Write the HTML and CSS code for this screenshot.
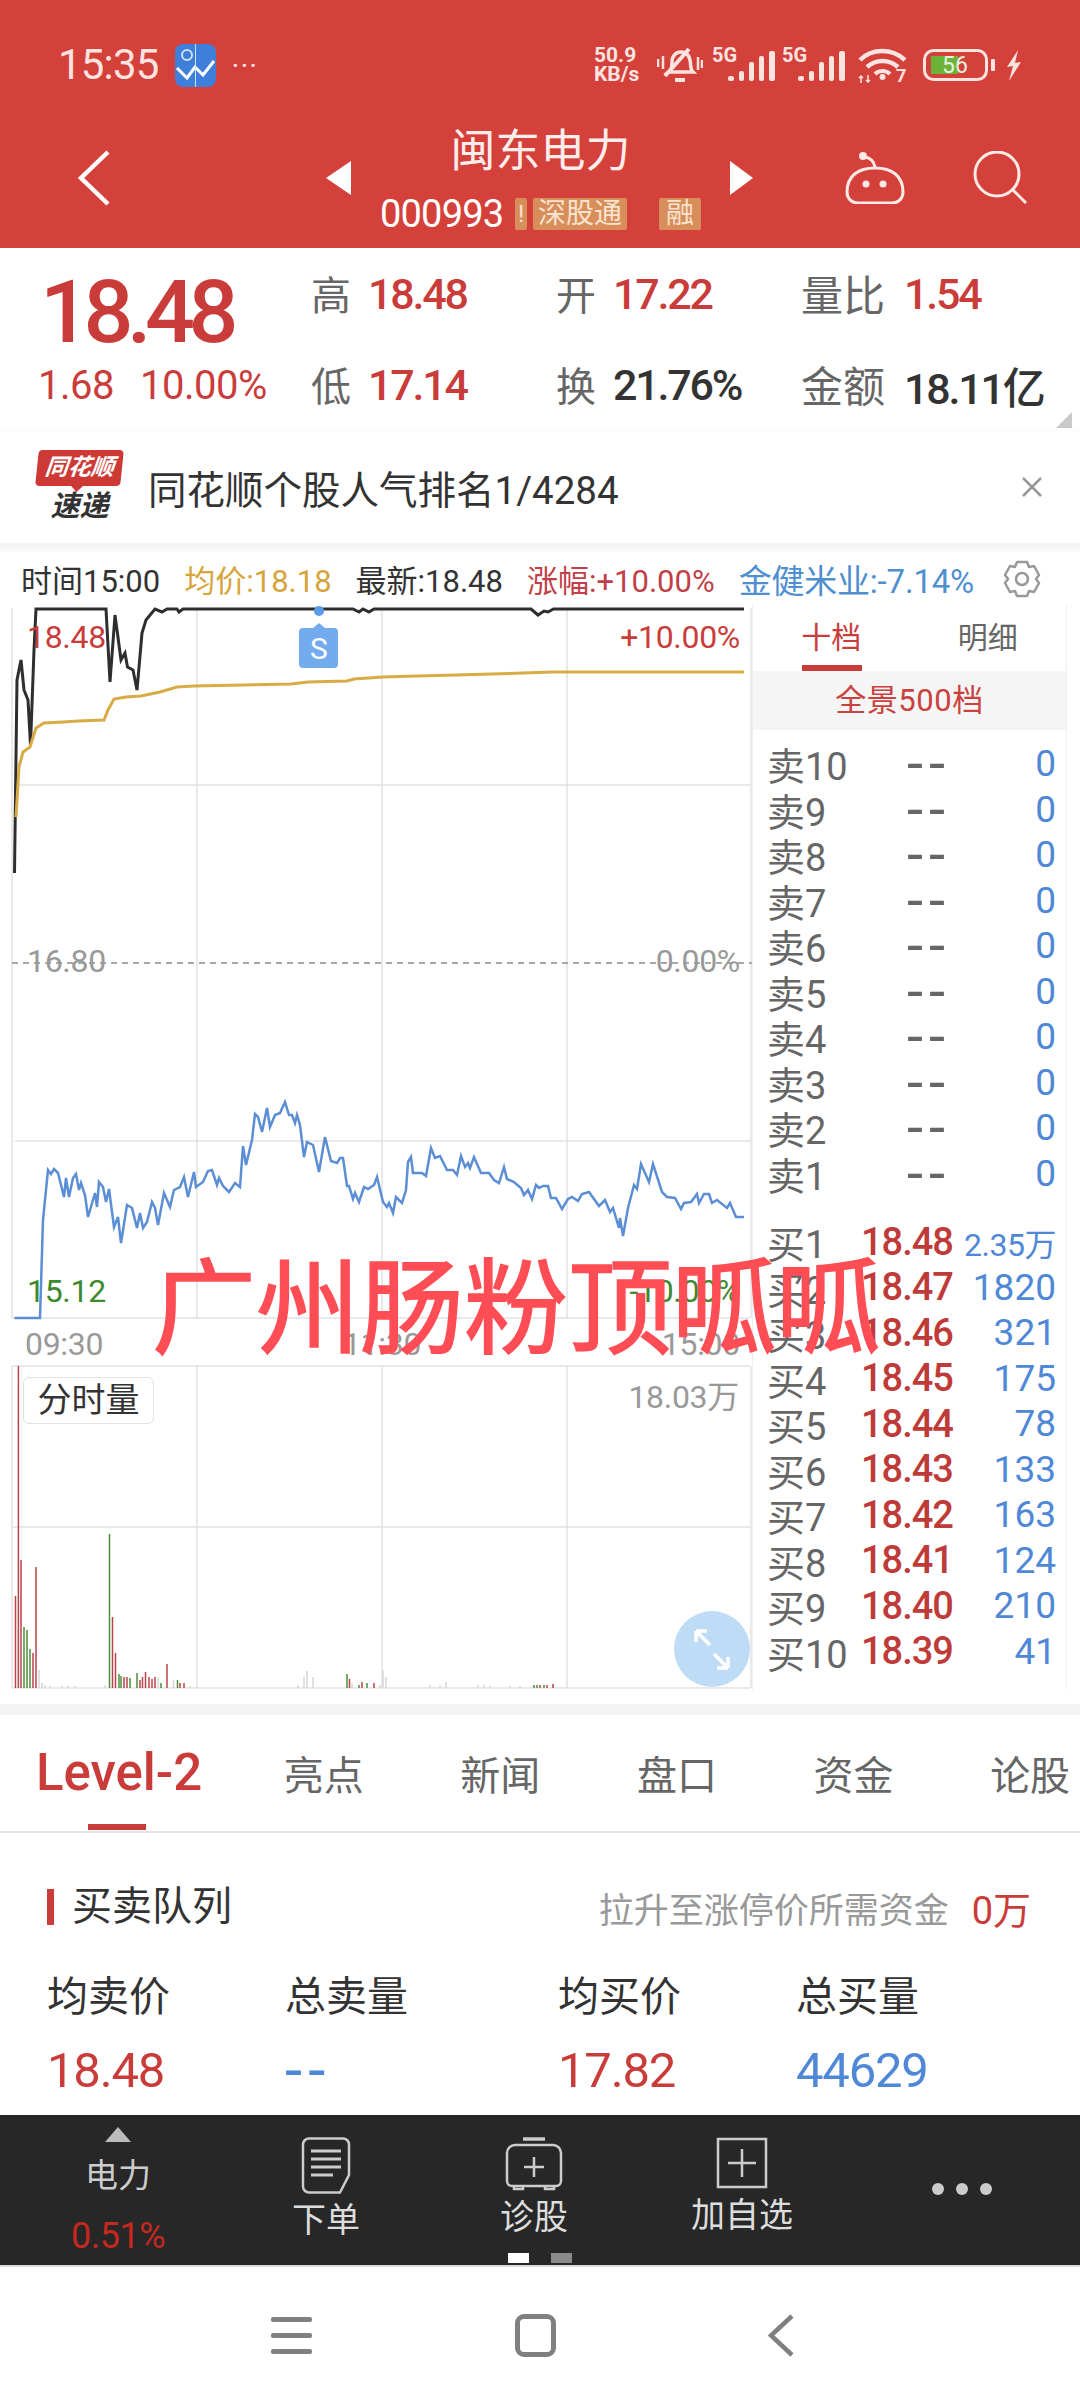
FILE: index.html
```html
<!DOCTYPE html>
<html lang="zh-CN">
<head>
    <meta charset="UTF-8">
    <meta name="viewport" content="width=device-width, initial-scale=1.0">
    <title>闽东电力</title>
    <link rel="stylesheet" href="styles.css">
</head>
<body>
<div id="page">
    <div id="header">
        <div class="status">
            <span class="time">15:35</span>
            <svg class="app-icon" width="41" height="43" viewBox="0 0 41 43">
                <rect width="41" height="43" rx="8" fill="#3f7fdc"/>
                <path d="M2 24l10 10 8-11 8 8 11-14" fill="none" stroke="#fff" stroke-width="3"/>
                <path d="M20.500 0v43" stroke="#cfe0f8" stroke-width="1"/>
                <circle cx="12" cy="11" r="5" fill="none" stroke="#cfe0f8" stroke-width="2"/>
            </svg>
            <span class="more">···</span>
            <div class="status-right">
                <div class="speed"><span>50.9</span><span>KB/s</span></div>
                <svg class="st-bell" width="46" height="38" viewBox="0 0 46 38" fill="none" stroke="#fbe3e0" stroke-width="3.500">
                    <path d="M12 26c3-2 3-6 3-10 0-6 4-10 9-10s8 3 9 8c1 5 0 9 3 12z"/>
                    <path d="M32 3L8 30" stroke-width="4"/>
                    <path d="M18 34h10" stroke-width="4"/>
                    <path d="M1 13v8M6 10v13M41 11v13M45 14v8" stroke-width="2.500"/>
                </svg>
                <svg class="st-sig1" width="63" height="46" viewBox="0 -4 63 46" fill="#fbe3e0">
                    <text x="0" y="16" class="sig-text">5G</text>
                    <rect x="16" y="30" width="6" height="5" rx="2"/>
                    <rect x="27" y="25" width="5" height="10" rx="2"/>
                    <rect x="37" y="16" width="5" height="19" rx="2"/>
                    <rect x="47" y="10" width="5" height="25" rx="2"/>
                    <rect x="57" y="5" width="6" height="30" rx="2"/>
                </svg>
                <svg class="st-sig2" width="63" height="46" viewBox="0 -4 63 46" fill="#fbe3e0">
                    <text x="0" y="16" class="sig-text">5G</text>
                    <rect x="16" y="30" width="6" height="5" rx="2"/>
                    <rect x="27" y="25" width="5" height="10" rx="2"/>
                    <rect x="37" y="16" width="5" height="19" rx="2"/>
                    <rect x="47" y="10" width="5" height="25" rx="2"/>
                    <rect x="57" y="5" width="6" height="30" rx="2"/>
                </svg>
                <svg class="st-wifi" width="49" height="46" viewBox="0 -4 49 46" fill="none" stroke="#fbe3e0">
                    <path d="M2 14C14 2 34 2 47 14" stroke-width="4.500"/>
                    <path d="M9 21c9-8 22-8 31 0" stroke-width="4.500"/>
                    <path d="M17 28c4-4 11-4 15 0" stroke-width="4"/>
                    <circle cx="24.500" cy="31" r="3" fill="#fbe3e0" stroke="none"/>
                    <path d="M3 37v-7M1 32l2-2 2 2M10 29v7M8 34l2 2 2-2" stroke-width="1.500"/>
                    <text x="38" y="36" class="wifi-num">7</text>
                </svg>
                <svg class="st-batt" width="72" height="32" viewBox="0 0 72 32">
                    <rect x="1.500" y="1.500" width="62" height="29" rx="9" fill="none" stroke="#fbe3e0" stroke-width="3"/>
                    <rect x="8" y="7" width="27" height="18" fill="#6cb33a"/>
                    <text x="32" y="24" text-anchor="middle" class="batt-num">56</text>
                    <rect x="68" y="10" width="4" height="12" rx="1" fill="#fbe3e0"/>
                </svg>
                <svg class="st-bolt" width="17" height="31" viewBox="0 0 17 31" fill="#fbe3e0">
                    <path d="M13 0L2 17l6-1-4 15L16 12l-6 1z"/>
                </svg>
            </div>
        </div>
        <div class="nav-row">
            <svg class="back" width="33" height="56" viewBox="0 0 33 56" fill="none" stroke="#fff" stroke-width="4.500">
                <path d="M31 2L4 28l27 26"/>
            </svg>
            <span class="tri tri-left"></span>
            <div class="stock">
                <div class="stock-name">闽东电力</div>
                <div class="stock-code">
                    <span class="code">000993</span>
                    <span class="tag tag-cut">!</span>
                    <span class="tag tag-sgt">深股通</span>
                    <span class="tag tag-rong">融</span>
                </div>
            </div>
            <span class="tri tri-right"></span>
            <svg class="robot" width="60" height="52" viewBox="0 0 60 52" fill="none" stroke="#fde9e6" stroke-width="3">
                <circle cx="18" cy="4" r="4" fill="#fde9e6" stroke="none"/>
                <path d="M20 5c6 1 9 5 10 10"/>
                <path d="M2 40C2 24 13 16 30 16s28 8 28 24c0 7-5 11-11 11H13C7 51 2 47 2 40z"/>
                <circle cx="21" cy="32" r="3.500" fill="#fde9e6" stroke="none"/>
                <circle cx="38" cy="32" r="3.500" fill="#fde9e6" stroke="none"/>
            </svg>
            <svg class="search" width="55" height="54" viewBox="0 0 55 54" fill="none" stroke="#fde9e6" stroke-width="3">
                <circle cx="24" cy="23" r="22"/>
                <path d="M40 39l13 13"/>
            </svg>
        </div>
    </div>

    <div class="quote">
        <div class="price">18.48</div>
        <div class="stat"><span class="lbl">高</span><span class="val red">18.48</span></div>
        <div class="stat"><span class="lbl">开</span><span class="val red">17.22</span></div>
        <div class="stat"><span class="lbl wide">量比</span><span class="val red">1.54</span></div>
        <div class="change"><span>1.68</span><span>10.00%</span></div>
        <div class="stat"><span class="lbl">低</span><span class="val red">17.14</span></div>
        <div class="stat"><span class="lbl">换</span><span class="val dark">21.76%</span></div>
        <div class="stat"><span class="lbl wide">金额</span><span class="val dark">18.11亿</span></div>
        <span class="corner"></span>
    </div>

    <div class="notice">
        <div class="logo">
            <div class="logo-top">同花顺</div>
            <div class="logo-bot">速递</div>
        </div>
        <span class="notice-text">同花顺个股人气排名1/4284</span>
        <svg class="close" width="22" height="22" viewBox="0 0 22 22" stroke="#999" stroke-width="2.500">
            <path d="M2 2l18 18M20 2L2 20"/>
        </svg>
    </div>

    <div class="gap"></div>

    <div class="chart-head">
        <span class="c-dark">时间15:00</span>
        <span class="c-gold">均价:18.18</span>
        <span class="c-dark">最新:18.48</span>
        <span class="c-red">涨幅:+10.00%</span>
        <span class="c-blue">金健米业:-7.14%</span>
        <svg class="gear" width="40" height="38" viewBox="0 0 40 38" fill="none" stroke="#999" stroke-width="2.500">
            <path d="M15 2h10l2 5 5-1 5 9-3 4 3 4-5 9-5-1-2 5H15l-2-5-5 1-5-9 3-4-3-4 5-9 5 1z" stroke-linejoin="round"/>
            <circle cx="20" cy="19" r="6"/>
        </svg>
    </div>

    <div class="chart-row">
        <svg class="chart" width="752" height="1100" viewBox="0 605 752 1100" fill="none">
            <!-- grid -->
            <path class="grid" d="M12 608V1318M197 608V1318M382 608V1318M567 608V1318M751 608V1318M15 785H750M15 1141H750M12 1318H750"/>
            <path class="grid" d="M12 1366H750M12 1527H750M12 1688H750M12 1366V1688M197 1366V1688M382 1366V1688M567 1366V1688M751 1366V1688"/>
            <path class="mid" d="M12 963H755"/>
            <!-- price -->
            <path class="l-black" d="M14.500 873L17 680 21 660 24 690 28 700 30.500 745 34 650 36 609H106L110 682 115 615 121 660 125 653 127.500 667 133 670 137 690 142 633 146 620 155 609 162 612 167 609H177L179 612 183 609H347L353 609 359 612 363 609 369 612 374 609H531L538 615 544 611 548 612 553.500 609H744"/>
            <path class="l-gold" d="M16 817L19 767 23 752 30 747 36 728 44 723 63 722 78 721 104 720 108 710 114 699 126 697 141 696 160 692 177 687 194 686 291 684 308 682 347 681 354 679 383 677 417 676 456 675 523 673 553 672H744"/>
            <path class="l-blue" d="M14.500 1318H40L43 1220 48 1170 51 1174 54 1169 58 1173 64 1197 66 1178 69 1197 73 1178 76 1174 79 1190 81 1183 85 1195 88 1217 95 1193 97 1207 99 1182 103 1187 106 1202 109 1189 114 1227 118 1217 121 1243 127 1205 132 1208 137 1228 140 1213 143 1228 147 1222 152 1202 155 1208 158 1225 164 1193 170 1207 174 1190 180 1187 184 1177 188 1197 194 1172 196 1187 203 1182 208 1171 212 1170 217 1185 219 1178 223 1186 229 1192 235 1183 240 1187 243 1146 246 1165 252 1140 255 1114 258 1117 262 1132 267 1108 270 1127 275 1115 280 1113 285 1102 289 1115 292 1115 295 1123 297 1115 300 1125 304 1157 307 1142 313 1145 319 1172 325 1137 331 1161 337 1163 340 1158 343 1158 347 1186 349 1186 353 1199 355 1193 359 1202 364 1187 368 1189 374 1185 377 1177 383 1202 387 1207 389 1203 393 1213 396 1197 402 1203 406 1190 408 1162 411 1157 413 1173 422 1173 426 1176 431 1148 435 1158 440 1156 447 1170 453 1170 457 1175 461 1156 465 1167 468 1163 470 1168 474 1157 481 1173 489 1173 494 1180 499 1183 504 1167 507 1179 514 1182 521 1188 524 1195 528 1190 532 1199 536 1185 539 1188 543 1186 548 1186 551 1198 556 1198 562 1209 568 1199 572 1197 578 1201 582 1194 589 1192 599 1206 605 1200 610 1212 613 1208 619 1228 620 1218 623 1236 628 1208 634 1185 637 1189 641 1164 649 1182 653 1164 662 1192 667 1197 675 1198 681 1209 684 1203 691 1202 697 1194 699 1203 704 1194 709 1194 712 1203 717 1200 727 1208 730 1203 736 1217 744 1217"/>
            <!-- s marker -->
            <circle cx="319" cy="611" r="5" fill="#5b9bec"/>
            <path d="M299 632a4 4 0 0 1 4-4h10l6-5 6 5h9a4 4 0 0 1 4 4v32a4 4 0 0 1-4 4h-31a4 4 0 0 1-4-4z" fill="#74abee"/>
            <text x="319" y="659" text-anchor="middle" class="t-s">S</text>
            <!-- labels -->
            <text x="27" y="648" class="t-axis fill-red">18.48</text>
            <text x="740" y="648" text-anchor="end" class="t-axis fill-red">+10.00%</text>
            <text x="27" y="972" class="t-axis fill-gray">16.80</text>
            <text x="740" y="972" text-anchor="end" class="t-axis fill-gray">0.00%</text>
            <text x="27" y="1302" class="t-axis fill-green">15.12</text>
            <text x="740" y="1302" text-anchor="end" class="t-axis fill-green">-10.00%</text>
            <text x="25" y="1355" class="t-axis fill-gray">09:30</text>
            <text x="382" y="1355" text-anchor="middle" class="t-axis fill-gray">11:30</text>
            <text x="740" y="1355" text-anchor="end" class="t-axis fill-gray">15:00</text>
            <!-- volume -->
            <path class="v-gray" d="M39 1670V1688M42 1683V1688M45 1685V1688M50 1686V1688M62 1686V1688M68 1686V1688M75 1686V1688M105 1685V1688M158 1677V1688M173.500 1680V1688M190 1686V1688M298 1685V1688M304 1677V1688M307 1671V1688M313 1677V1688M352 1683V1688M380 1685V1688M383 1670V1688M386 1677V1688M430 1685V1688M440 1685V1688M446 1682V1688M478 1685V1688M484 1685V1688M490 1686V1688M510 1686V1688M520 1686V1688"/>
            <path class="v-red" d="M18.400 1366V1688M15.500 1596V1688M21 1560V1688M33 1653V1688M36 1567V1688M112.500 1617V1688M115.500 1653V1688M124 1677V1688M127 1677V1688M140 1680V1688M142.500 1677V1688M145.500 1672V1688M149 1677V1688M152 1679V1688M155 1677V1688M167 1664V1688M180 1683V1688M184 1683V1688M349.500 1679V1688M362 1682V1688M374 1683V1688M540 1685V1688M547 1685V1688M553 1684V1688"/>
            <path class="v-green" d="M24 1627V1688M27 1630V1688M30 1649V1688M109.500 1534V1688M119 1674V1688M121 1676V1688M130 1678V1688M137 1673V1688M161 1683V1688M177.500 1680V1688M347 1674V1688M359 1685V1688M367 1683V1688M534 1685V1688M537 1685V1688M544 1685V1688"/>
            <text x="739" y="1408" text-anchor="end" class="t-axis fill-gray">18.03万</text>
            <!-- expand button -->
            <circle cx="712" cy="1649" r="38" fill="#bfdcf7"/>
            <path d="M696 1631v11M696 1631h11M696 1631l14 14M728 1668v-11M728 1668h-11M728 1668l-14-14" stroke="#fff" stroke-width="3.500"/>
        </svg>
        <div class="vol-tag">分时量</div>
        <div class="book">
            <div class="book-tabs">
                <span class="book-tab on">十档</span>
                <span class="book-tab">明细</span>
            </div>
            <div class="book-band">全景500档</div>
            <div class="book-list sell">
                <div class="row"><span class="r-name">卖10</span><span class="r-price none">--</span><span class="r-qty">0</span></div>
                <div class="row"><span class="r-name">卖9</span><span class="r-price none">--</span><span class="r-qty">0</span></div>
                <div class="row"><span class="r-name">卖8</span><span class="r-price none">--</span><span class="r-qty">0</span></div>
                <div class="row"><span class="r-name">卖7</span><span class="r-price none">--</span><span class="r-qty">0</span></div>
                <div class="row"><span class="r-name">卖6</span><span class="r-price none">--</span><span class="r-qty">0</span></div>
                <div class="row"><span class="r-name">卖5</span><span class="r-price none">--</span><span class="r-qty">0</span></div>
                <div class="row"><span class="r-name">卖4</span><span class="r-price none">--</span><span class="r-qty">0</span></div>
                <div class="row"><span class="r-name">卖3</span><span class="r-price none">--</span><span class="r-qty">0</span></div>
                <div class="row"><span class="r-name">卖2</span><span class="r-price none">--</span><span class="r-qty">0</span></div>
                <div class="row"><span class="r-name">卖1</span><span class="r-price none">--</span><span class="r-qty">0</span></div>
            </div>
            <div class="book-list buy">
                <div class="row"><span class="r-name">买1</span><span class="r-price">18.48</span><span class="r-qty small">2.35万</span></div>
                <div class="row"><span class="r-name">买2</span><span class="r-price">18.47</span><span class="r-qty">1820</span></div>
                <div class="row"><span class="r-name">买3</span><span class="r-price">18.46</span><span class="r-qty">321</span></div>
                <div class="row"><span class="r-name">买4</span><span class="r-price">18.45</span><span class="r-qty">175</span></div>
                <div class="row"><span class="r-name">买5</span><span class="r-price">18.44</span><span class="r-qty">78</span></div>
                <div class="row"><span class="r-name">买6</span><span class="r-price">18.43</span><span class="r-qty">133</span></div>
                <div class="row"><span class="r-name">买7</span><span class="r-price">18.42</span><span class="r-qty">163</span></div>
                <div class="row"><span class="r-name">买8</span><span class="r-price">18.41</span><span class="r-qty">124</span></div>
                <div class="row"><span class="r-name">买9</span><span class="r-price">18.40</span><span class="r-qty">210</span></div>
                <div class="row"><span class="r-name">买10</span><span class="r-price">18.39</span><span class="r-qty">41</span></div>
            </div>
        </div>
        <div class="watermark">广州肠粉顶呱呱</div>
    </div>

    <div class="gap2"></div>

    <div class="tabs">
        <span class="tab on">Level-2</span>
        <span class="tab">亮点</span>
        <span class="tab">新闻</span>
        <span class="tab">盘口</span>
        <span class="tab">资金</span>
        <span class="tab">论股</span>
    </div>

    <div class="queue">
        <div class="queue-head">
            <span class="queue-title">买卖队列</span>
            <span class="queue-note">拉升至涨停价所需资金</span>
            <span class="queue-amt">0万</span>
        </div>
        <div class="queue-grid">
            <span class="q-lbl">均卖价</span>
            <span class="q-lbl">总卖量</span>
            <span class="q-lbl">均买价</span>
            <span class="q-lbl">总买量</span>
            <span class="q-val red">18.48</span>
            <span class="q-val blue q-dash">--</span>
            <span class="q-val red">17.82</span>
            <span class="q-val blue">44629</span>
        </div>
    </div>

    <div class="toolbar">
        <div class="tool tool-sector">
            <span class="up"></span>
            <span class="sector-name">电力</span>
            <span class="sector-pct">0.51%</span>
        </div>
        <div class="tool">
            <svg width="50" height="57" viewBox="0 0 50 57" fill="none" stroke="#ccc" stroke-width="2.500">
                <path d="M8 1.500h34a6 6 0 0 1 6 6V38L39 55.500H8a6 6 0 0 1-6-6v-42a6 6 0 0 1 6-6z"/>
                <path d="M10 14h30M10 22h30M10 30h30M10 38h22" stroke-width="3"/>
            </svg>
            <span class="tool-name">下单</span>
        </div>
        <div class="tool">
            <svg width="58" height="54" viewBox="0 0 58 54" fill="none" stroke="#ccc" stroke-width="2.500">
                <path d="M18 2h22" stroke-width="3.500"/>
                <path d="M10 8h38a8 8 0 0 1 8 8v28a5 5 0 0 1-5 5H7a5 5 0 0 1-5-5V16a8 8 0 0 1 8-8z"/>
                <path d="M29 20v20M19 30h20M9 49v3h9v-3M40 49v3h9v-3"/>
            </svg>
            <span class="tool-name">诊股</span>
        </div>
        <div class="tool">
            <svg width="52" height="52" viewBox="0 0 52 52" fill="none" stroke="#ccc" stroke-width="2.500">
                <path d="M2 2h48v48H2zM26 12v28M12 26h28"/>
            </svg>
            <span class="tool-name">加自选</span>
        </div>
        <div class="tool tool-more"><i></i><i></i><i></i></div>
        <span class="page-dot on"></span>
        <span class="page-dot off"></span>
    </div>

    <div class="sysnav">
        <span class="menu"><i></i><i></i><i></i></span>
        <span class="home"></span>
        <svg class="sys-back" width="26" height="43" viewBox="0 0 26 43" fill="none" stroke="#808080" stroke-width="4.500">
            <path d="M24 2L3 21.500 24 41"/>
        </svg>
    </div>
</div>
</body>
</html>
```

FILE: styles.css
```css
* {
    box-sizing: border-box;
}

body {
    margin: 0;
    padding: 0;
    background-color: #fff;
    font-family: Roboto, "Noto Sans CJK SC", sans-serif;
}

#page {
    width: 1080px;
    height: 2403px;
    overflow: hidden;
    position: relative;
}

.red { color: #c93c3a; }
.blue { color: #4f88d6; }
.dark { color: #333; }

/* header */
#header {
    height: 248px;
    background-color: #d4403a;
}

.status {
    height: 126px;
    display: flex;
    align-items: center;
    padding: 4px 58px 0 58px;
    color: #fbe3e0;
}

.time {
    font-size: 42px;
    letter-spacing: -0.800px;
    line-height: 1;
}

.app-icon { margin-left: 16px; }

.more {
    margin-left: 16px;
    font-size: 30px;
    letter-spacing: 1px;
}

.status-right {
    margin-left: auto;
    display: flex;
    align-items: center;
}

.speed {
    width: 52px;
    display: flex;
    flex-direction: column;
    font-size: 21px;
    font-weight: 700;
    line-height: 19px;
}

.st-bell { margin-left: 11px; }
.st-sig1 { margin-left: 9px; }
.st-sig2 { margin-left: 7px; }
.st-wifi { margin-left: 13px; }
.st-batt { margin-left: 16px; }
.st-bolt { margin-left: 10px; }

.sig-text {
    font-size: 20px;
    font-weight: 700;
    fill: #fbe3e0;
    stroke: none;
}

.wifi-num {
    font-size: 18px;
    font-weight: 700;
    fill: #fbe3e0;
    stroke: none;
}

.batt-num {
    font-size: 23px;
    fill: #e6f3dc;
}

.nav-row {
    height: 122px;
    padding: 0 0 18px 77px;
    display: flex;
    align-items: center;
}

.tri {
    width: 0;
    height: 0;
    border-top: 17px solid transparent;
    border-bottom: 17px solid transparent;
}

.tri-left {
    margin-left: 216px;
    border-right: 25px solid #fff;
}

.tri-right {
    border-left: 23px solid #fff;
}

.stock {
    width: 379px;
}

.stock-name {
    height: 50px;
    line-height: 50px;
    font-size: 45px;
    text-align: center;
    color: #fdeeec;
}

.stock-code {
    margin-top: 21px;
    height: 32px;
    padding-left: 29px;
    display: flex;
    align-items: center;
}

.code {
    width: 135px;
    font-size: 38px;
    letter-spacing: -0.800px;
    color: #fff;
}

.tag {
    height: 32px;
    line-height: 32px;
    background-color: #d88e5b;
    color: #f8e3cf;
    font-size: 28px;
    border-radius: 2px;
    text-align: center;
}

.tag-cut {
    width: 12px;
    overflow: hidden;
    font-size: 24px;
}

.tag-sgt {
    margin-left: 6px;
    width: 94px;
    white-space: nowrap;
}

.tag-rong {
    margin-left: 32px;
    width: 42px;
}

.robot { margin-left: 92px; }
.search { margin-left: 68px; }

/* quote */
.quote {
    height: 182px;
    position: relative;
    display: grid;
    grid-template-columns: 273px 245px 245px 1fr;
    grid-template-rows: 92px 90px;
    padding-left: 38px;
    align-items: center;
}

.price {
    margin-top: 36px;
    padding-left: 2px;
    height: 56px;
    line-height: 56px;
    font-size: 88px;
    font-weight: 500;
    letter-spacing: -6.500px;
    color: #c93c3a;
}

.change {
    display: flex;
    gap: 26px;
    font-size: 40px;
    letter-spacing: -0.500px;
    color: #c93c3a;
}

.stat {
    display: flex;
    align-items: center;
}

.lbl {
    width: 57px;
    margin-top: -3px;
    font-size: 40px;
    color: #666;
}

.lbl.wide {
    width: 103px;
    font-size: 42px;
}

.val {
    font-size: 43px;
    font-weight: 500;
    letter-spacing: -2.200px;
}

.corner {
    position: absolute;
    right: 8px;
    bottom: 2px;
    width: 0;
    height: 0;
    border-left: 16px solid transparent;
    border-bottom: 16px solid #c9c9c9;
}

/* notice */
.notice {
    height: 113px;
    padding: 0 37px;
    display: flex;
    align-items: center;
    border-top: 1px solid #f8f8f8;
}

.logo {
    width: 85px;
    height: 74px;
}

.logo-top {
    position: relative;
    height: 36px;
    line-height: 35px;
    background-color: #cd3a36;
    border-radius: 4px;
    transform: skewX(-6deg);
    color: #fff;
    font-size: 23px;
    font-weight: 700;
    font-style: italic;
    text-align: center;
    white-space: nowrap;
}

.logo-top::after {
    content: "";
    position: absolute;
    left: 36px;
    bottom: -6px;
    width: 12px;
    height: 12px;
    background-color: #cd3a36;
    transform: rotate(45deg) scale(0.7);
}

.logo-bot {
    margin-top: 4px;
    line-height: 32px;
    font-size: 29px;
    font-weight: 700;
    font-style: italic;
    text-align: center;
    color: #333;
}

.notice-text {
    margin-left: 26px;
    font-size: 38.500px;
    color: #333;
}

.close {
    margin-left: auto;
}

.gap {
    height: 9px;
    background: linear-gradient(#f2f2f2, #fbfbfb);
}

/* chart head */
.chart-head {
    height: 53px;
    padding: 0 0 0 21px;
    display: flex;
    align-items: center;
    gap: 24px;
    font-size: 31px;
    white-space: nowrap;
}

.c-dark { color: #333; }
.c-gold { color: #d6a43a; }
.c-red { color: #c23f48; }
.c-blue { color: #4f8fd0; font-size: 33px; letter-spacing: -0.200px; }

.gear { margin-left: 4px; }

/* chart */
.chart-row {
    height: 1099px;
    position: relative;
    display: flex;
}

.chart { flex: none; }

.grid {
    stroke: #e2e2e4;
    stroke-width: 1.500;
}

.mid {
    stroke: #a8a8a8;
    stroke-width: 2;
    stroke-dasharray: 6 5;
}

.l-black {
    stroke: #2e2e2e;
    stroke-width: 3;
}

.l-gold {
    stroke: #d8ab46;
    stroke-width: 3;
}

.l-blue {
    stroke: #5b8ed4;
    stroke-width: 2.500;
}

.v-red {
    stroke: #b9444a;
    stroke-width: 1.500;
}

.v-green {
    stroke: #4c8c3a;
    stroke-width: 1.500;
}

.v-gray {
    stroke: #d6d6d6;
    stroke-width: 1.500;
}

.t-axis {
    font-size: 32px;
    letter-spacing: -0.300px;
    stroke: none;
}

.t-s {
    font-size: 30px;
    fill: #fff;
    stroke: none;
}

.fill-red { fill: #c93c3a; }
.fill-gray { fill: #999; }
.fill-green { fill: #3d8a2e; }

.vol-tag {
    position: absolute;
    left: 23px;
    top: 772px;
    width: 131px;
    height: 47px;
    line-height: 44px;
    background-color: #fff;
    border: 1.500px solid #e2e2e2;
    border-radius: 6px;
    font-size: 34px;
    text-align: center;
    color: #333;
}

.watermark {
    position: absolute;
    left: 152px;
    top: 641px;
    font-size: 104px;
    line-height: 130px;
    font-weight: 400;
    -webkit-text-stroke: 1.500px #ff4d55;
    color: #ff4d55;
    white-space: nowrap;
}

/* order book */
.book {
    width: 315px;
    height: 1085px;
    border-right: 1.500px solid #f0f0f0;
    border-left: 1.500px solid #efefef;
}

.book-tabs {
    height: 66px;
    display: flex;
}

.book-tab {
    width: 157px;
    text-align: center;
    padding-top: 8px;
    font-size: 30px;
    color: #666;
}

.book-tab.on {
    position: relative;
    color: #c93c3a;
}

.book-tab.on::after {
    content: "";
    position: absolute;
    left: 49px;
    bottom: 0;
    width: 60px;
    height: 6px;
    background-color: #c93c3a;
}

.book-band {
    height: 59px;
    line-height: 59px;
    background-color: #f6f5f5;
    text-align: center;
    font-size: 31px;
    letter-spacing: 0.500px;
    color: #c9423f;
}

.book-list {
    padding: 0 10px 0 14px;
}

.sell { margin-top: 6px; }
.buy { margin-top: 23px; }

.row {
    height: 45.500px;
    display: grid;
    grid-template-columns: 94px 90px 1fr;
    align-items: center;
    white-space: nowrap;
}

.r-name {
    font-size: 38px;
    color: #666;
}

.r-price {
    font-size: 38px;
    font-weight: 500;
    letter-spacing: -1px;
    color: #bf3b39;
    text-align: right;
}

.r-price.none {
    font-size: 58px;
    font-weight: 400;
    letter-spacing: 6px;
    line-height: 45px;
    color: #666;
}

.r-qty {
    font-size: 37px;
    color: #4f88d6;
    text-align: right;
}

.r-qty.small {
    font-size: 32px;
    letter-spacing: -0.500px;
}

/* bottom tabs */
.gap2 {
    height: 11px;
    background-color: #f4f4f4;
}

.tabs {
    height: 118px;
    padding-left: 36px;
    display: flex;
    align-items: center;
    gap: 96.600px;
    border-bottom: 2px solid #e4e4e4;
    white-space: nowrap;
}

.tab {
    font-size: 40px;
    color: #666;
}

.tab.on {
    position: relative;
    margin-right: -15px;
    font-size: 51px;
    line-height: 60px;
    font-weight: 500;
    color: #c93c3a;
}

.tab.on::after {
    content: "";
    position: absolute;
    left: 52px;
    top: 81px;
    width: 58px;
    height: 6px;
    background-color: #c93c3a;
}

/* queue */
.queue {
    height: 282px;
    padding: 56px 49px 0 47px;
}

.queue-head {
    height: 36px;
    display: flex;
    align-items: center;
}

.queue-title {
    height: 36px;
    line-height: 36px;
    border-left: 7px solid #c93c3a;
    padding-left: 18px;
    font-size: 40px;
    color: #333;
}

.queue-note {
    margin-left: auto;
    font-size: 35px;
    color: #999;
}

.queue-amt {
    margin-left: 23px;
    font-size: 38px;
    color: #c93c3a;
}

.queue-grid {
    margin-top: 43px;
    display: grid;
    grid-template-columns: 238px 273px 238px 1fr;
    grid-template-rows: 50px 60px;
    row-gap: 22px;
    align-items: center;
}

.q-lbl {
    font-size: 41px;
    color: #333;
}

.q-val {
    font-size: 49px;
    letter-spacing: -1.200px;
}

.q-dash {
    font-size: 62px;
    letter-spacing: 6px;
    line-height: 60px;
}

/* dark toolbar */
.toolbar {
    height: 152px;
    padding-left: 14px;
    background-color: #272727;
    position: relative;
    display: flex;
    border-bottom: 2px solid #ddd;
}

.tool {
    width: 208px;
    padding-top: 22px;
    display: flex;
    flex-direction: column;
    align-items: center;
    color: #ddd;
}

.tool-name {
    font-size: 34px;
    line-height: 50px;
    margin-top: 1px;
}

.tool-sector {
    padding-top: 12px;
}

.up {
    width: 0;
    height: 0;
    border-left: 13px solid transparent;
    border-right: 13px solid transparent;
    border-bottom: 15px solid #bbb;
}

.sector-name {
    margin-top: 12px;
    font-size: 33px;
    line-height: 44px;
    color: #ccc;
}

.sector-pct {
    margin-top: 16px;
    font-size: 36px;
    line-height: 44px;
    letter-spacing: -0.500px;
    color: #c4281e;
}

.tool-more {
    flex-direction: row;
    justify-content: center;
    align-items: flex-start;
    gap: 12px;
    padding: 68px 0 0 24px;
}

.tool-more i {
    width: 12px;
    height: 12px;
    border-radius: 50%;
    background-color: #ccc;
}

.page-dot {
    position: absolute;
    top: 138px;
    width: 21px;
    height: 10px;
}

.page-dot.on {
    left: 508px;
    background-color: #fff;
}

.page-dot.off {
    left: 551px;
    background-color: #8a8a8a;
}

/* system nav */
.sysnav {
    height: 136px;
    padding-left: 271px;
    display: flex;
    align-items: center;
}

.menu {
    width: 41px;
    display: flex;
    flex-direction: column;
    gap: 11px;
}

.menu i {
    height: 5px;
    border-radius: 2px;
    background-color: #808080;
}

.home {
    margin-left: 203px;
    width: 41px;
    height: 43px;
    border: 5px solid #808080;
    border-radius: 9px;
}

.sys-back {
    margin-left: 212px;
}
```
